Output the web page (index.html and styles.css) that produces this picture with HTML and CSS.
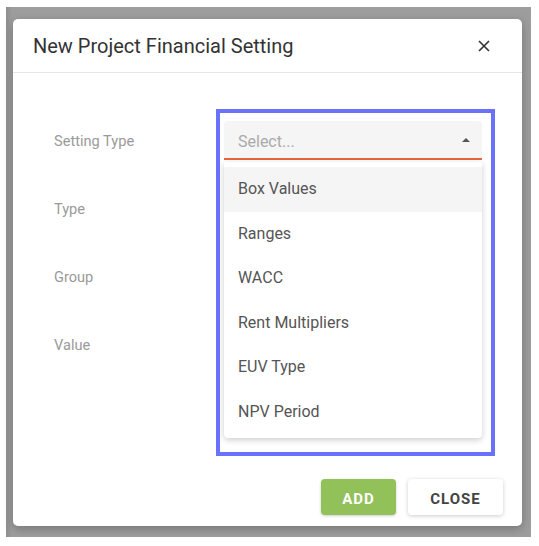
FILE: index.html
```html
<!DOCTYPE html>
<html lang="en">
<head>
    <meta charset="UTF-8">
    <meta name="viewport" content="width=device-width, initial-scale=1.0">
    <title>New Project Financial Setting</title>
    <link rel="stylesheet" href="styles.css">
</head>
<body>
    <div class="backdrop">
        <div class="dialog">
            <div class="dialog-header">
                <h2>New Project Financial Setting</h2>
                <button class="close-icon" aria-label="Close">
                    <svg width="12" height="12" viewBox="0 0 12 12">
                        <path d="M1 1L11 11M11 1L1 11" stroke="#333" stroke-width="1.6" fill="none"/>
                    </svg>
                </button>
            </div>

            <div class="dialog-body">
                <div class="labels">
                    <div class="label">Setting Type</div>
                    <div class="label">Type</div>
                    <div class="label">Group</div>
                    <div class="label">Value</div>
                </div>

                <div class="fields highlight">
                    <div class="field select open">
                        <span class="placeholder">Select...</span>
                        <span class="arrow"></span>
                    </div>
                    <div class="field"></div>
                    <div class="field"></div>
                    <div class="field"></div>

                    <ul class="menu">
                        <li class="active">Box Values</li>
                        <li>Ranges</li>
                        <li>WACC</li>
                        <li>Rent Multipliers</li>
                        <li>EUV Type</li>
                        <li>NPV Period</li>
                    </ul>
                </div>
            </div>

            <div class="dialog-footer">
                <button class="btn add-btn">Add</button>
                <button class="btn close-btn">Close</button>
            </div>
        </div>
    </div>
</body>
</html>
```

FILE: styles.css
```css
* {
    margin: 0;
    padding: 0;
    box-sizing: border-box;
}

body {
    font-family: Roboto, "Liberation Sans", Arial, sans-serif;
    background-color: #fff;
    padding: 7px 8px 9px 6px;
}

.backdrop {
    width: 525px;
    height: 530px;
    background: linear-gradient(to right, #8e8e8e 0, #9d9d9d 6px, #9d9d9d 100%);
    padding: 12px 9px 11px 7px;
}

.dialog {
    width: 509px;
    height: 507px;
    background-color: white;
    border-radius: 5px;
    box-shadow: 0 3px 10px rgba(0, 0, 0, 0.25);
    display: flex;
    flex-direction: column;
}

.dialog-header {
    height: 54px;
    display: flex;
    align-items: center;
    justify-content: space-between;
    padding: 0 32px 0 20px;
    border-bottom: 1px solid #e6e6e6;
}

.dialog-header h2 {
    font-size: 20px;
    font-weight: 400;
    color: #333;
}

.close-icon {
    background: none;
    border: none;
    width: 12px;
    height: 12px;
    display: flex;
    cursor: pointer;
}

.dialog-body {
    display: flex;
    padding: 36px 0 0 41px;
}

.labels {
    width: 162px;
    padding-top: 12px;
}

.label {
    height: 39px;
    line-height: 41px;
    margin-bottom: 29px;
    font-size: 14.6px;
    color: #9a9a9a;
}

.fields {
    position: relative;
    width: 279px;
    height: 347px;
    padding: 8px 9px 0 4px;
}

.highlight {
    border: 4px solid #6a72fb;
}

.field {
    height: 39px;
    margin-bottom: 29px;
    background-color: #f5f5f5;
    border-radius: 4px 4px 0 0;
    border-bottom: 1px solid #cfcfcf;
}

.select {
    display: flex;
    align-items: center;
    justify-content: space-between;
    padding: 3px 12px 0 14px;
}

.select.open {
    border-bottom: 2px solid #e8643c;
}

.placeholder {
    font-size: 16px;
    color: #aaa;
}

.arrow {
    width: 0;
    height: 0;
    border-left: 4px solid transparent;
    border-right: 4px solid transparent;
    border-bottom: 4px solid #555;
    margin-top: -3px;
}

.menu {
    position: absolute;
    top: 49px;
    left: 4px;
    width: 258px;
    list-style: none;
    background-color: white;
    border-radius: 0 0 4px 4px;
    box-shadow: 0 2px 6px rgba(0, 0, 0, 0.2);
    padding: 5px 0 3px;
}

.menu li {
    height: 44.6px;
    line-height: 44.6px;
    padding-left: 14px;
    font-size: 16px;
    color: #555;
}

.menu li.active {
    background-color: #f5f5f5;
}

.dialog-footer {
    margin-top: auto;
    display: flex;
    justify-content: flex-end;
    gap: 12px;
    padding: 0 19px 11px 0;
}

.btn {
    height: 36px;
    border: none;
    border-radius: 4px;
    font-family: inherit;
    font-size: 15px;
    font-weight: 700;
    letter-spacing: 1px;
    text-transform: uppercase;
    padding-top: 3px;
    cursor: pointer;
}

.add-btn {
    width: 75px;
    background-color: #92c15a;
    color: white;
    box-shadow: 0 1px 3px rgba(0, 0, 0, 0.2);
}

.close-btn {
    width: 95px;
    background-color: white;
    color: #444;
    box-shadow: 0 1px 4px rgba(0, 0, 0, 0.2);
}
```
